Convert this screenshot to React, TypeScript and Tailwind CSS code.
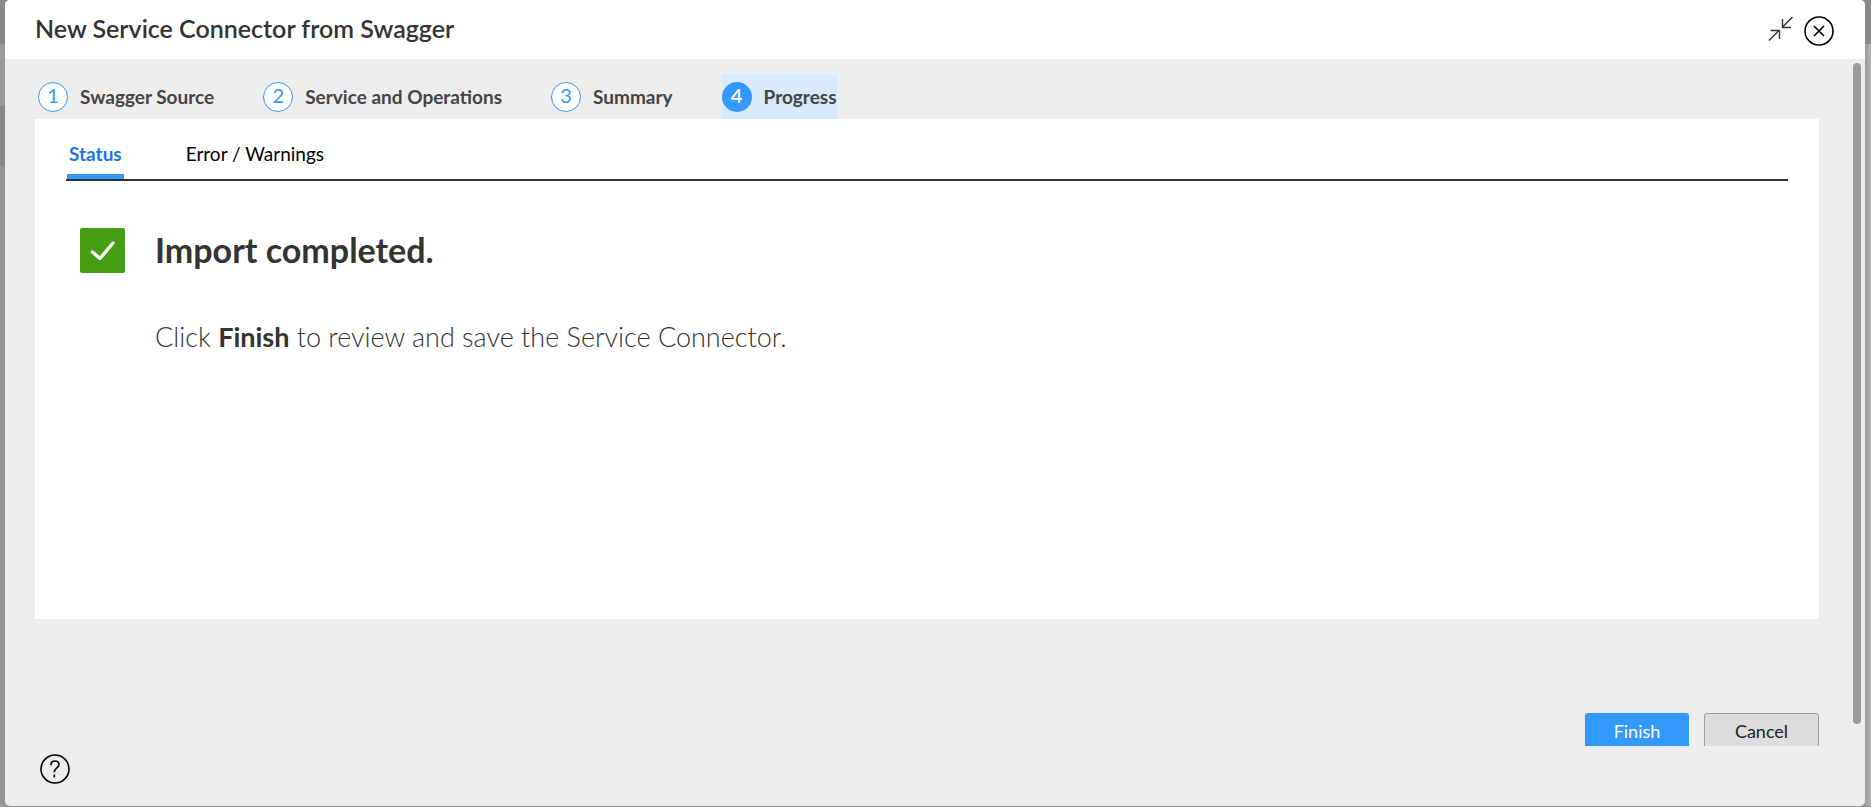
import React from "react";

const steps = ["Swagger Source", "Service and Operations", "Summary", "Progress"];

export default function App() {
  return (
    <div className="flex min-h-screen flex-col bg-white pr-[3px] pb-[3px] font-['Lato',sans-serif]">
      <div className="flex flex-1 bg-[linear-gradient(to_bottom,#888_0_44px,#999_44px_106px,#888_106px_166px,#959595_166px)] pb-px pl-[5px]">
        <main className="flex flex-1 flex-col overflow-hidden rounded-[5px] bg-[#ededed]">
          <header className="flex h-[59px] items-center justify-between bg-white pr-[31px] pl-[30px]">
            <h1 className="pb-1 text-[25px] leading-7 font-semibold text-[#333]">New Service Connector from Swagger</h1>
            <div className="flex items-center gap-[11px] pt-[3px]">
              <button aria-label="Restore size">
                <svg width="25" height="28" viewBox="0 0 25 28" fill="none" stroke="#333" strokeWidth="1.4">
                  <path d="M24.500 0L14.500 10M14.500 2V10.500H23M1 23.500L11 13.500M2.500 13.500H11.500V22" />
                </svg>
              </button>
              <button aria-label="Close">
                <svg width="30" height="30" viewBox="0 0 30 30" fill="none" stroke="#000" strokeWidth="1.600">
                  <circle cx="15" cy="15" r="14" />
                  <path d="M10 10L20 20M20 10L10 20" />
                </svg>
              </button>
            </div>
          </header>
          <div className="flex flex-1 justify-between pt-1 pr-1">
            <div className="flex flex-1 flex-col pl-[30px]">
              <ol className="flex gap-[49px] pt-[11px] pl-[3px]">
                {steps.map((label, i) => (
                  <li
                    key={label}
                    className={
                      i === 3 ? "flex h-[45px] items-center gap-3 bg-[#d6eafc]" : "flex h-[45px] items-center gap-3"
                    }
                  >
                    <span
                      className={
                        i === 3
                          ? "flex size-[30px] items-center justify-center rounded-full bg-[#3399ff] pb-1 text-xl leading-6 font-semibold text-white"
                          : "flex size-[30px] items-center justify-center rounded-full border border-[#3399ff] bg-white pb-1 text-xl leading-6 text-[#3399ff]"
                      }
                    >
                      {i + 1}
                    </span>
                    <span className="text-[19px] leading-6 font-bold text-[#444]">{label}</span>
                  </li>
                ))}
              </ol>
              <section className="mr-[34px] h-[500px] bg-white px-[31px] pt-3">
                <div role="tablist" className="flex items-stretch gap-[62px] border-b-2 border-[#333] pl-px text-[19px]">
                  <button role="tab" aria-selected="true" className="h-12 border-b-[5px] border-[#3399ff] px-0.5 pt-1 font-bold text-[#1f74e8]">
                    Status
                  </button>
                  <button role="tab" aria-selected="false" className="h-12 border-b-[5px] border-transparent pt-1 text-black">
                    Error / Warnings
                  </button>
                </div>
                <div className="flex gap-[30px] pt-[47px] pl-[14px] text-[#333]">
                  <svg width="45" height="45" viewBox="0 0 45 45" fill="none">
                    <rect width="45" height="45" rx="2" fill="#459d12" />
                    <path d="M12.500 24L20 30.500L33 15" stroke="#fff" strokeWidth="3.400" strokeLinecap="round" strokeLinejoin="round" />
                  </svg>
                  <div>
                    <h2 className="text-[34px] leading-[43px] font-bold">Import completed.</h2>
                    <p className="mt-12 text-[27px] leading-9 font-light">
                      Click <b className="font-bold">Finish</b> to review and save the Service Connector.
                    </p>
                  </div>
                </div>
              </section>
              <div className="mt-[94px] mr-[34px] flex h-[33px] justify-end gap-[15px] overflow-hidden text-lg">
                <button className="h-10 w-[104px] rounded-[3px] bg-[#3399ff] pb-1 text-white">Finish</button>
                <button className="h-10 w-[115px] rounded-[3px] border border-[#999] bg-[#ddd] pb-1 text-[#222]">Cancel</button>
              </div>
              <footer className="pt-2 pl-[5px]">
                <button aria-label="Help">
                  <svg width="30" height="30" viewBox="0 0 30 30" fill="none" stroke="#000" strokeWidth="1.600">
                    <circle cx="15" cy="15" r="14" />
                    <path d="M11 11.200V10.500C11 8 12.500 7 15 7C17.500 7 19 8.300 19 10.600C19 14 14.300 14 14.300 18.200M14.300 20.500V23.500" />
                  </svg>
                </button>
              </footer>
            </div>
            <div className="h-[661px] w-2 rounded-full bg-[#9b9b9b]" />
          </div>
        </main>
        <div className="flex w-[6px] flex-col bg-linear-to-r from-[#999] to-[#b5b5b5]">
          <div className="h-11 bg-[#888]" />
        </div>
      </div>
    </div>
  );
}
